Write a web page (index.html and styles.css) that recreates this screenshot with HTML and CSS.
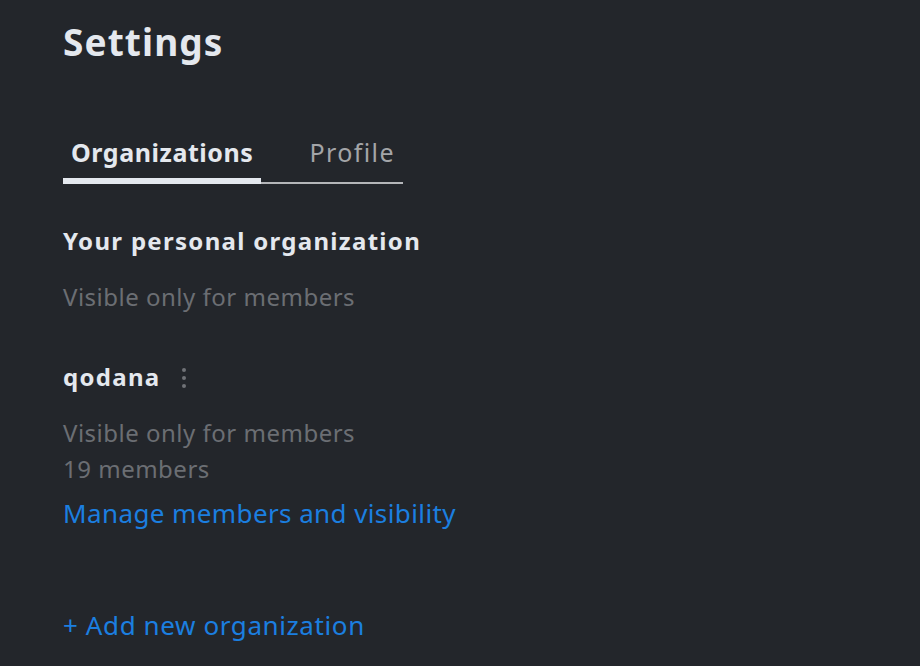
FILE: index.html
```html
<!DOCTYPE html>
<html>
<head>
<meta charset="utf-8">
<link rel="stylesheet" href="styles.css">
</head>
<body>
<div class="page">
  <h1 class="title">Settings</h1>
  <div class="tabs">
    <div class="tab active">Organizations</div>
    <div class="tab">Profile</div>
  </div>
  <section class="org">
    <h2 class="org-name">Your personal organization</h2>
    <div class="muted">Visible only for members</div>
  </section>
  <section class="org">
    <div class="org-head">
      <h2 class="org-name">qodana</h2>
      <span class="kebab"><i></i><i></i><i></i></span>
    </div>
    <div class="muted first">Visible only for members</div>
    <div class="muted">19 members</div>
    <a class="link manage" href="#">Manage members and visibility</a>
  </section>
  <a class="link add" href="#">+ Add new organization</a>
</div>
</body>
</html>
```
FILE: styles.css
```css
html, body {
  margin: 0;
  padding: 0;
  background: #23262b;
}
body {
  font-family: "Noto Sans", "Open Sans", sans-serif;
  color: #e4e8ee;
}
.page {
  padding: 16px 0 0 63px;
  display: flex;
  flex-direction: column;
  align-items: flex-start;
}
.title {
  margin: 0;
  font-size: 37px;
  font-weight: 700;
  line-height: 52px;
  letter-spacing: 1.1px;
}
.tabs {
  margin-top: 68px;
  display: flex;
  border-bottom: 2px solid #b4b6b9;
}
.tab {
  font-size: 25px;
  line-height: 32px;
  padding: 0 8px 10px 8px;
  color: #a3a5a8;
  margin-right: 40px;
  margin-bottom: -2px;
  border-bottom: 6px solid transparent;
  letter-spacing: 1.4px;
}
.tab:last-child { margin-right: 0; }
.tab.active {
  font-weight: 700;
  color: #e4e8ee;
  border-bottom-color: #e4e8ee;
  letter-spacing: 0.55px;
}
.org {
  display: flex;
  flex-direction: column;
  align-items: flex-start;
}
.org-name {
  margin: 0;
  font-size: 24px;
  font-weight: 700;
  line-height: 32px;
  letter-spacing: 1.3px;
}
.org:first-of-type { margin-top: 41px; }
.org + .org { margin-top: 46px; }
.org-head {
  display: flex;
  align-items: center;
  gap: 21px;
}
.kebab {
  display: flex;
  flex-direction: column;
  gap: 4px;
  margin-top: 2px;
}
.kebab i {
  width: 4px;
  height: 4px;
  border-radius: 50%;
  background: #6f7277;
}
.muted {
  color: #6b6e73;
  font-size: 24px;
  line-height: 36px;
  letter-spacing: 0.5px;
}
.org:first-of-type .muted { margin-top: 22px; }
.muted.first { margin-top: 22px; }
.link {
  color: #1b7fe0;
  text-decoration: none;
  font-size: 26px;
  line-height: 36px;
  letter-spacing: 0.4px;
}
.manage { margin-top: 8px; }
.add { margin-top: 76px; letter-spacing: 0.6px; }
```
